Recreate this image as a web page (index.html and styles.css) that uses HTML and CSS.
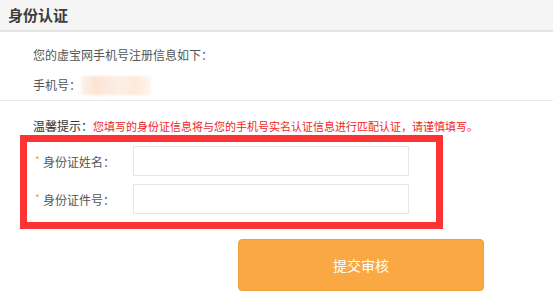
FILE: index.html
```html
<!DOCTYPE html>
<html lang="zh-CN">
<head>
<meta charset="utf-8">
<title>身份认证</title>
<link rel="stylesheet" href="styles.css">
</head>
<body>
<div class="page">
  <div class="header"><h1 class="title">身份认证</h1></div>
  <div class="info">
    <p class="info-line">您的虚宝网手机号注册信息如下：</p>
    <p class="info-line">手机号：<span class="phone"></span></p>
  </div>
  <div class="form-area">
    <p class="tip"><span class="tip-label">温馨提示：</span><span class="tip-text">您填写的身份证信息将与您的手机号实名认证信息进行匹配认证，请谨慎填写。</span></p>
    <div class="highlight">
      <div class="row">
        <label class="label"><span class="star">*</span>身份证姓名：</label>
        <input class="field" type="text">
      </div>
      <div class="row">
        <label class="label"><span class="star">*</span>身份证件号：</label>
        <input class="field" type="text">
      </div>
    </div>
    <div class="actions">
      <button class="submit" type="button">提交审核</button>
    </div>
  </div>
</div>
</body>
</html>
```
FILE: styles.css
```css
* { box-sizing: border-box; }
html, body { margin: 0; padding: 0; background: #fff; }
body {
  font-family: "Noto Sans CJK SC", "Noto Sans", sans-serif;
  color: #555;
}
.page { width: 553px; }
.header {
  height: 32px;
  background: #f5f5f5;
  border-bottom: 2px solid #e4e4e4;
  padding-left: 8px;
}
.title {
  margin: 0;
  font-size: 15px;
  line-height: 30px;
  font-weight: bold;
  color: #3c3c3c;
}
.info {
  padding: 17px 0 0 33px;
  height: 69px;
  border-bottom: 1px solid #e8e8e8;
}
.info-line {
  margin: 0 0 18px 0;
  font-size: 12px;
  line-height: 12px;
  display: flex;
  align-items: center;
  height: 12px;
}
.phone {
  display: inline-block;
  width: 70px;
  height: 19px;
  margin-left: 0;
  background: linear-gradient(90deg, #fdf3ec 0%, #fde4d3 20%, #fdeee4 55%, #feeadc 80%, #fff6f0 100%);
  filter: blur(1px);
}
.form-area { padding-top: 17px; }
.tip {
  margin: 0 0 5px 33px;
  line-height: 12px;
  height: 12px;
  white-space: nowrap;
}
.tip-label { color: #333; font-size: 12px; }
.tip-text { color: #f01e1e; font-size: 11px; }
.highlight {
  margin-left: 20px;
  width: 423px;
  height: 94px;
  border: 7px solid #fd3333;
  padding: 4px 0 0 8px;
  display: flex;
  flex-direction: column;
  gap: 8px;
}
.row {
  display: flex;
  align-items: center;
  height: 30px;
}
.label {
  width: 98px;
  font-size: 12px;
  color: #555;
  display: flex;
  align-items: center;
}
.star {
  color: #f5a43a;
  font-size: 10px;
  width: 8px;
  margin-top: -4px;
}
.field {
  width: 276px;
  height: 30px;
  border: 1px solid #e6e6e6;
  outline: none;
  background: #fff;
  margin: 0;
  padding: 0 6px;
}
.actions {
  padding: 10px 0 0 238px;
}
.submit {
  width: 246px;
  height: 52px;
  background: #f9a844;
  border: 1px solid #eea13c;
  border-radius: 4px;
  color: #fff;
  font-size: 14px;
  font-family: inherit;
  padding: 0;
  cursor: pointer;
}
```
